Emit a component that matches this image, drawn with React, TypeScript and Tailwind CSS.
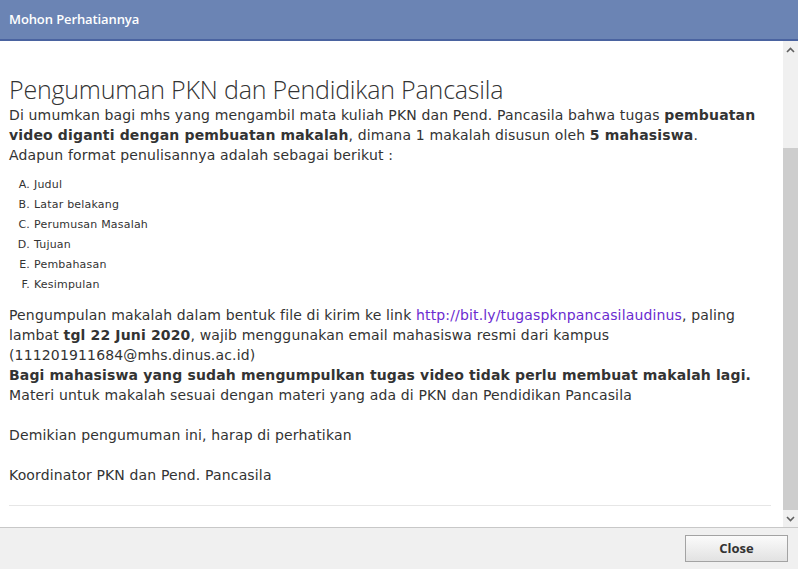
export default function App() {
  const items = ["Judul", "Latar belakang", "Perumusan Masalah", "Tujuan", "Pembahasan", "Kesimpulan"];
  const letters = ["A", "B", "C", "D", "E", "F"];

  return (
    <div className="w-[798px] h-[569px] flex flex-col bg-white overflow-hidden">
      {/* Dialog title bar */}
      <div className="h-[41px] shrink-0 bg-[#6b84b4] border-b-2 border-[#4a63a0] flex items-center px-[9px]">
        <span className="text-white text-[13px] font-semibold font-['Open_Sans',sans-serif] tracking-[-0.1px]">
          Mohon Perhatiannya
        </span>
      </div>

      {/* Body with scrollbar */}
      <div className="flex-1 flex min-h-0">
        <div className="flex-1 pl-[9px] pr-[12px] pt-[32px] text-[#333] font-['DejaVu_Sans',Verdana,sans-serif] text-[14px] leading-[20px] tracking-[0.15px]">
          <h1 className="text-[25px] leading-[32px] font-light text-[#333] font-['Open_Sans',sans-serif] tracking-[-0.2px]">
            Pengumuman PKN dan Pendidikan Pancasila
          </h1>
          <p className="mt-0">
            Di umumkan bagi mhs yang mengambil mata kuliah PKN dan Pend. Pancasila bahwa tugas{" "}
            <b>pembuatan video diganti dengan pembuatan makalah</b>, dimana 1 makalah disusun oleh{" "}
            <b>5 mahasiswa</b>.
          </p>
          <p>Adapun format penulisannya adalah sebagai berikut :</p>

          <ol className="mt-[10px] text-[11px] leading-[20px] tracking-[0.2px]">
            {items.map((it, i) => (
              <li key={it} className="flex">
                <span className="w-[25px] text-right pr-[4px]">{letters[i]}.</span>
                <span>{it}</span>
              </li>
            ))}
          </ol>

          <p className="mt-[10px]">
            Pengumpulan makalah dalam bentuk file di kirim ke link{" "}
            <a className="text-[#6a2bd0]">http://bit.ly/tugaspknpancasilaudinus</a>, paling lambat{" "}
            <b>tgl 22 Juni 2020</b>, wajib menggunakan email mahasiswa resmi dari kampus
            (111201911684@mhs.dinus.ac.id)
          </p>
          <p className="font-bold">
            Bagi mahasiswa yang sudah mengumpulkan tugas video tidak perlu membuat makalah lagi.
          </p>
          <p>Materi untuk makalah sesuai dengan materi yang ada di PKN dan Pendidikan Pancasila</p>
          <p className="mt-[20px]">Demikian pengumuman ini, harap di perhatikan</p>
          <p className="mt-[20px]">Koordinator PKN dan Pend. Pancasila</p>

          <div className="mt-[20px] h-px bg-[#e6e6e6]" />
        </div>

        {/* Scrollbar */}
        <div className="w-[15px] shrink-0 bg-[#f0f0f0] flex flex-col">
          <div className="h-[17px] flex items-center justify-center">
            <svg width="9" height="6" viewBox="0 0 9 6">
              <path d="M1 5 L4.5 1.5 L8 5" fill="none" stroke="#606060" strokeWidth="1.6" />
            </svg>
          </div>
          <div className="h-[90px]" />
          <div className="flex-1 bg-[#cdcdcd]" />
          <div className="h-[17px] flex items-center justify-center">
            <svg width="9" height="6" viewBox="0 0 9 6">
              <path d="M1 1 L4.5 4.5 L8 1" fill="none" stroke="#606060" strokeWidth="1.6" />
            </svg>
          </div>
        </div>
      </div>

      {/* Footer */}
      <div className="h-[42px] shrink-0 bg-[#f0f0f0] border-t border-[#c8c8c8] flex items-center justify-end pr-[10px]">
        <button className="w-[103px] h-[27px] border border-[#a3a3a3] bg-gradient-to-b from-[#fbfbfb] to-[#e2e2e2] text-[#333] text-[13px] font-bold font-['Open_Sans',sans-serif]">
          Close
        </button>
      </div>
    </div>
  );
}
